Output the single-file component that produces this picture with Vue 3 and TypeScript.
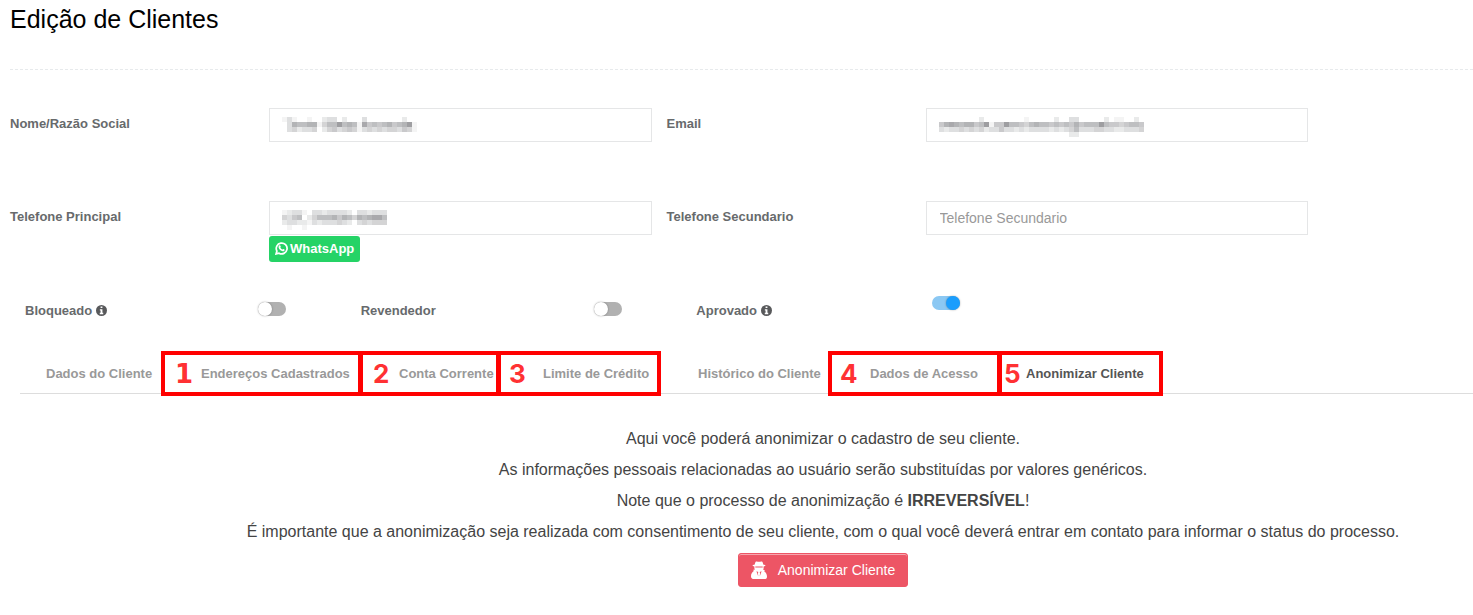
<script setup lang="ts">
import { ref } from 'vue'

interface Field {
  id: string
  label: string
  type: string
  placeholder: string
  mask: string[]
  whatsapp?: boolean
}

interface Flag {
  id: string
  label: string
  info: boolean
  on: boolean
}

interface Tab {
  label: string
  mark?: string
  cls: string
}

interface Cell {
  x: number
  y: number
  o: number
}

// Each digit is the darkness of one 5px mosaic block, 0 is empty.
const fields: Field[] = [
  {
    id: 'nome',
    label: 'Nome/Razão Social',
    type: 'text',
    placeholder: '',
    mask: ['131001002330200030000000200', '037667714669676185656756791', '034233402453454134343443541'],
  },
  {
    id: 'email',
    label: 'Email',
    type: 'email',
    placeholder: '',
    mask: [
      '00000000200000000100000200330000020110020',
      '57876775691559665467665656575666965545665',
      '32334343423353323233332323463334433223334',
      '00000000000000000000000000220000000000000',
    ],
  },
  {
    id: 'tel1',
    label: 'Telefone Principal',
    type: 'tel',
    placeholder: '',
    mask: ['123310332333320332333', '435602466675764767886', '233221323334320343444', '010010000000000000000'],
    whatsapp: true,
  },
  { id: 'tel2', label: 'Telefone Secundario', type: 'tel', placeholder: 'Telefone Secundario', mask: [] },
]

const flags = ref<Flag[]>([
  { id: 'bloqueado', label: 'Bloqueado', info: true, on: false },
  { id: 'revendedor', label: 'Revendedor', info: false, on: false },
  { id: 'aprovado', label: 'Aprovado', info: true, on: true },
])

const tabs: Tab[] = [
  { label: 'Dados do Cliente', cls: 'dados' },
  { label: 'Endereços Cadastrados', mark: '1', cls: 'enderecos' },
  { label: 'Conta Corrente', mark: '2', cls: 'conta' },
  { label: 'Limite de Crédito', mark: '3', cls: 'limite' },
  { label: 'Histórico do Cliente', cls: 'historico' },
  { label: 'Dados de Acesso', mark: '4', cls: 'acesso' },
  { label: 'Anonimizar Cliente', mark: '5', cls: 'anonimizar' },
]

function cells(mask: string[]): Cell[] {
  return mask.flatMap((row, y) =>
    [...row].map((d, x) => ({ x: x * 5, y: y * 5, o: Number(d) / 10 })).filter((c) => c.o > 0),
  )
}
</script>

<template>
  <main class="page">
    <h1>Edição de Clientes</h1>
    <form class="form" @submit.prevent>
      <div v-for="f in fields" :key="f.id" class="field">
        <label :for="f.id">{{ f.label }}</label>
        <div class="control">
          <input :id="f.id" :type="f.type" :placeholder="f.placeholder" />
          <svg v-if="f.mask.length" class="mask" width="206" height="20" shape-rendering="crispEdges" aria-hidden="true">
            <rect
              v-for="(c, i) in cells(f.mask)"
              :key="i"
              :x="c.x"
              :y="c.y"
              width="5"
              height="5"
              fill="#939497"
              :fill-opacity="c.o"
            />
          </svg>
          <button v-if="f.whatsapp" type="button" class="whats">
            <svg width="13" height="13" viewBox="0 0 24 24" aria-hidden="true">
              <path fill="none" stroke="#fff" stroke-width="3.2" d="M2 22l1.500-5.300A10 10 0 1 1 7.400 20.700z" />
              <path
                fill="#fff"
                d="M8.200 6.200c.5-.4 1.200-.4 1.500.2l.9 2c.2.500 0 .9-.8 1.900.9 1.800 2.200 2.900 4 3.700.7-.8 1-1.300 1.500-1.100l2.200 1.100c.5.3.2 1.600-.3 2.200-1 1-2.500 1.200-4.200.6-3.200-1.100-5.400-3.300-6.300-6-.5-1.800.3-3.600 1.500-4.600z"
              />
            </svg>
            WhatsApp
          </button>
        </div>
      </div>
    </form>

    <div class="flags">
      <div v-for="f in flags" :key="f.id" class="flag" :class="{ raised: f.on }">
        <label :for="f.id">
          {{ f.label }}
          <svg v-if="f.info" width="11" height="11" viewBox="0 0 12 12" aria-hidden="true">
            <circle cx="6" cy="6" r="6" fill="#58595b" />
            <path fill="#fff" d="M5 1.700h2v1.700H5zM4.200 4.500H7v4h.9V10H4.100V8.500H5V6h-.8z" />
          </svg>
        </label>
        <input :id="f.id" v-model="f.on" type="checkbox" class="switch" />
      </div>
    </div>

    <nav class="tabs">
      <ul>
        <li v-for="t in tabs" :key="t.label" :class="[t.cls, { marked: t.mark }]">
          <span v-if="t.mark" class="num">{{ t.mark }}</span>
          <a href="#">{{ t.label }}</a>
        </li>
      </ul>
    </nav>

    <section class="panel">
      <p>Aqui você poderá anonimizar o cadastro de seu cliente.</p>
      <p>As informações pessoais relacionadas ao usuário serão substituídas por valores genéricos.</p>
      <p>Note que o processo de anonimização é <strong>IRREVERSÍVEL</strong>!</p>
      <p>
        É importante que a anonimização seja realizada com consentimento de seu cliente, com o qual você deverá entrar
        em contato para informar o status do processo.
      </p>
      <button type="button" class="danger">
        <svg width="16" height="18" viewBox="0 0 16 18" aria-hidden="true">
          <path
            fill="#fff"
            d="M5 .6C5.900 0 7 .8 8 .8s2.100-.8 3-.2c.7.500 1 1.800 1.200 2.900 1.400.2 2.300.6 2.300 1.100s-.8.800-1.900 1v1.600c0 .7-.1 1.200-.4 1.700h1.600l-.6 1.300c1.700 1.100 2.800 3.100 2.800 5.200 0 1.700-1 2.800-2.700 2.800H2.700C1 18 0 17 0 15.300c0-2.200 1.100-4.100 2.800-5.200l-.6-1.400h1.600c-.3-.5-.4-1-.4-1.600V5.600c-1.100-.2-1.900-.5-1.900-1s.9-.9 2.300-1.100C4 2.400 4.300 1.100 5 .6z"
          />
          <path
            fill="#ed5565"
            d="M4.300 5.500h7.400v1H4.300zM5.400 10.200l2 .8-.5 1 .4 3.500zM10.600 10.200l-2 .8.500 1-.4 3.500z"
          />
        </svg>
        Anonimizar Cliente
      </button>
    </section>
  </main>
</template>

<style>
body {
  margin: 0;
  background: #fff;
  overflow-x: hidden;
}
</style>

<style scoped>
.page {
  font-family: 'Liberation Sans', Arial, sans-serif;
  font-size: 13px;
  color: #676a6c;
}
* {
  box-sizing: border-box;
}
h1 {
  margin: 0 0 0 10px;
  padding: 4px 0 35px;
  border-bottom: 1px dashed #e7eaec;
  font-size: 25px;
  line-height: 30px;
  font-weight: 400;
  color: #000;
}
.form {
  display: grid;
  grid-template-columns: 1fr 1fr;
  padding: 38px 150px 0 10px;
}
.field {
  display: flex;
  align-items: flex-start;
  min-height: 93px;
  padding-right: 15px;
}
label {
  font-weight: 700;
}
.field label {
  width: 259px;
  padding-top: 7px;
  line-height: 18px;
}
.control {
  position: relative;
  flex: 1;
}
.control input {
  display: block;
  width: 100%;
  height: 34px;
  padding: 6px 13px;
  border: 1px solid #e5e6e7;
  background: #fff;
  font: 14px 'Liberation Sans', Arial, sans-serif;
  color: #676a6c;
}
.control input::placeholder {
  color: #999;
}
.mask {
  position: absolute;
  left: 13px;
  top: 9px;
  pointer-events: none;
}
.whats {
  display: flex;
  align-items: center;
  gap: 2px;
  height: 26px;
  margin-top: 1px;
  padding: 0 6px 2px;
  border: 0;
  border-radius: 3px;
  background: #25d366;
  font: 700 13px 'Liberation Sans', Arial, sans-serif;
  color: #fff;
}
.flags {
  display: grid;
  grid-template-columns: repeat(3, 1fr);
  padding: 0 441px 0 25px;
}
.flag {
  display: flex;
  align-items: flex-start;
  height: 57px;
}
.flag label {
  width: 233px;
  padding-top: 8px;
  line-height: 18px;
}
.flag label svg {
  vertical-align: -1px;
}
.switch {
  appearance: none;
  display: flex;
  width: 28px;
  height: 14px;
  margin: 8px 0 0;
  border-radius: 7px;
  background: #b1b1b1;
}
.switch::before {
  content: '';
  width: 14px;
  height: 14px;
  border-radius: 50%;
  background: #fff;
  box-shadow: 0 0 2px rgba(0, 0, 0, 0.35);
}
.switch:checked {
  justify-content: flex-end;
  background: #8bc8f3;
}
.switch:checked::before {
  background: #1a9dfd;
}
.raised label {
  width: 236px;
}
.raised .switch {
  margin-top: 2px;
}
.tabs {
  margin-left: 20px;
}
ul {
  display: flex;
  margin: 0;
  padding: 0;
  list-style: none;
  background: linear-gradient(#ddd, #ddd) 0 42px / 100% 1px no-repeat;
}
li {
  display: flex;
  align-items: center;
  height: 45px;
  white-space: nowrap;
}
.marked {
  border: 4px solid #f00;
  background: #fff;
}
a {
  font-weight: 700;
  line-height: 18px;
  color: #999;
  text-decoration: none;
}
.anonimizar a {
  color: #555;
}
.num {
  font: 700 26px Inter, sans-serif;
  line-height: 30px;
  color: #ff3133;
}
.dados {
  width: 141px;
  padding-left: 26px;
}
.enderecos {
  width: 201px;
  padding-left: 10px;
}
.enderecos .num {
  width: 26px;
  font-family: 'DejaVu Sans', sans-serif;
}
.conta {
  width: 141px;
  margin-left: -3px;
  padding-left: 10px;
}
.conta .num {
  width: 26px;
}
.limite {
  width: 164px;
  margin-left: -3px;
  padding-left: 8px;
}
.limite .num {
  width: 34px;
}
.historico {
  width: 167px;
  padding-left: 37px;
}
.acesso {
  width: 173px;
  padding-left: 8px;
}
.acesso .num {
  width: 30px;
}
.anonimizar {
  width: 165px;
  margin-left: -3px;
  padding-left: 2px;
}
.anonimizar .num {
  width: 22px;
}
.panel {
  display: flex;
  flex-direction: column;
  align-items: center;
  padding: 32px 0 28px 173px;
  font-size: 16px;
  color: #444;
}
p {
  margin: 0 0 9px;
  line-height: 22px;
  white-space: nowrap;
}
.danger {
  display: flex;
  align-items: center;
  gap: 11px;
  height: 34px;
  margin-top: 1px;
  padding: 0 12px;
  border: 1px solid #ed5565;
  border-radius: 3px;
  background: #ed5565;
  box-shadow: inset 0 1px 0 #f7a5ae;
  font: 14px 'Liberation Sans', Arial, sans-serif;
  color: #fff;
}
</style>
